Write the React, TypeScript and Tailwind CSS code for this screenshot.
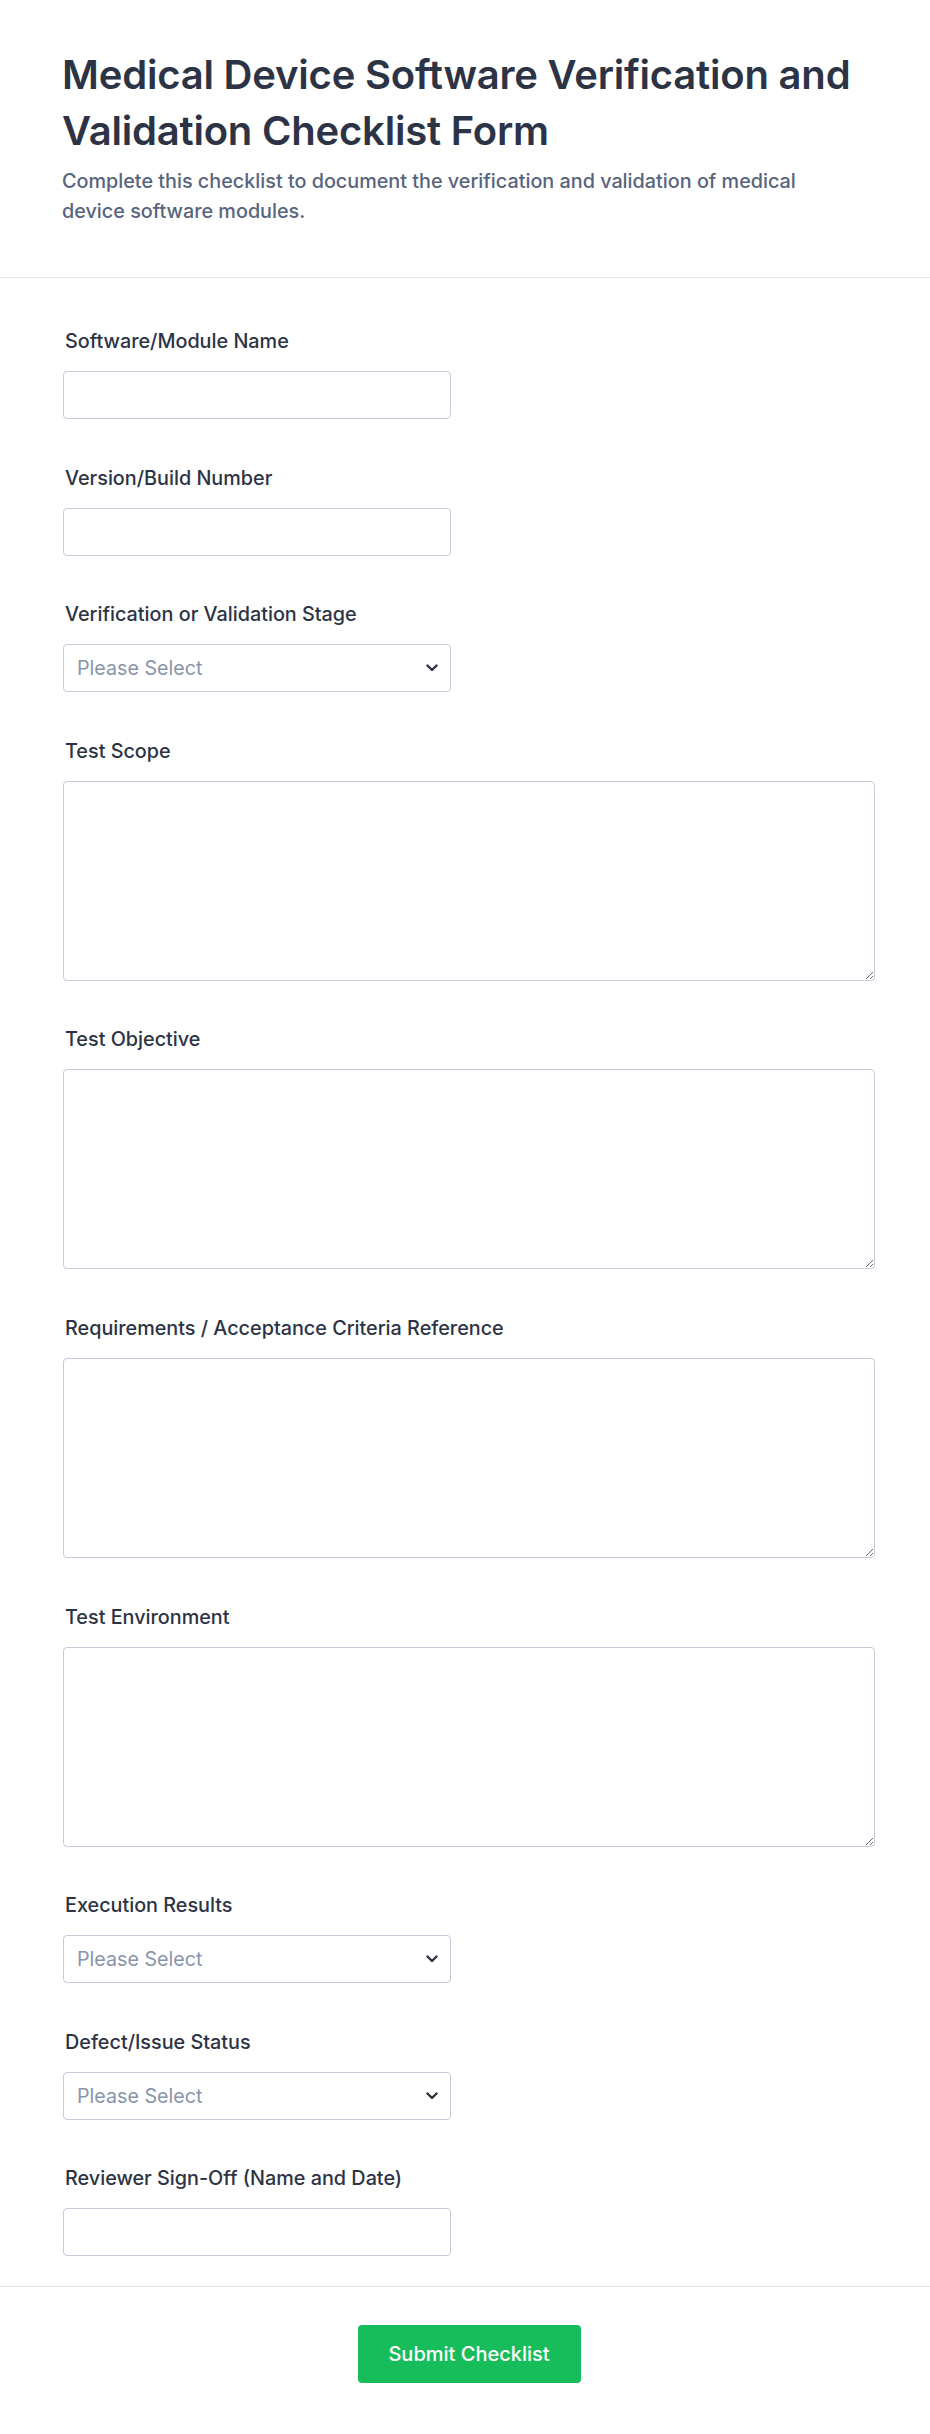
import React from "react";

type Field = { label: string; kind: "input" | "select" | "textarea" };

const fields: Field[] = [
  { label: "Software/Module Name", kind: "input" },
  { label: "Version/Build Number", kind: "input" },
  { label: "Verification or Validation Stage", kind: "select" },
  { label: "Test Scope", kind: "textarea" },
  { label: "Test Objective", kind: "textarea" },
  { label: "Requirements / Acceptance Criteria Reference", kind: "textarea" },
  { label: "Test Environment", kind: "textarea" },
  { label: "Execution Results", kind: "select" },
  { label: "Defect/Issue Status", kind: "select" },
  { label: "Reviewer Sign-Off (Name and Date)", kind: "input" },
];

function Chevron() {
  return (
    <svg width="12" height="8" viewBox="0 0 12 8" fill="none" className="shrink-0">
      <path d="M1.5 1.5L6 6L10.5 1.5" stroke="#2c3345" strokeWidth="2.4" strokeLinecap="round" strokeLinejoin="round" />
    </svg>
  );
}

function Control({ kind }: { kind: Field["kind"] }) {
  if (kind === "input") {
    return (
      <input
        type="text"
        className="block w-[388px] h-[48px] rounded-[4px] border border-[#c3cad8] bg-white px-[14px] text-[19px] text-[#2c3345] outline-none"
      />
    );
  }
  if (kind === "select") {
    return (
      <div className="flex w-[388px] h-[48px] items-center justify-between rounded-[4px] border border-[#c3cad8] bg-white pl-[13px] pr-[12px]">
        <span className="text-[19.7px] leading-[24px] text-[#8894ab]">Please Select</span>
        <Chevron />
      </div>
    );
  }
  return (
    <textarea className="block w-[812px] h-[200px] rounded-[4px] border border-[#c3cad8] bg-white p-[12px] text-[19px] text-[#2c3345] outline-none resize-y" />
  );
}

export default function App() {
  return (
    <div className="min-h-screen bg-white font-['Inter','Noto_Sans',sans-serif] text-[#2c3345]">
      <header className="border-b border-[#e3e5eb] pl-[62px] pt-[47px] pb-[51px]">
        <div className="w-[800px]">
          <h1 className="text-[40px] leading-[56px] font-semibold tracking-[-0.2px] text-[#2c3345]">
            Medical Device Software Verification and Validation Checklist Form
          </h1>
          <p className="mt-[7px] text-[19.8px] leading-[30px] font-medium text-[#57647e]">
            Complete this checklist to document the verification and validation of medical device software modules.
          </p>
        </div>
      </header>

      <main className="flex flex-col gap-[48.6px] pl-[63px] pt-[53px] pb-[30px]">
        {fields.map((f) => (
          <div key={f.label} className="flex flex-col">
            <label className="mb-[20px] pl-[2px] text-[19.8px] leading-[20px] font-medium text-[#2c3345]">
              {f.label}
            </label>
            <Control kind={f.kind} />
          </div>
        ))}
      </main>

      <footer className="flex justify-center border-t border-[#e3e5eb] pl-[63px] pr-[55px] pt-[38px] pb-[50px]">
        <button
          type="button"
          className="flex h-[58px] w-[223px] items-center justify-center rounded-[4px] bg-[#18bd5b] text-[20px] font-medium text-white"
        >
          Submit Checklist
        </button>
      </footer>
    </div>
  );
}
